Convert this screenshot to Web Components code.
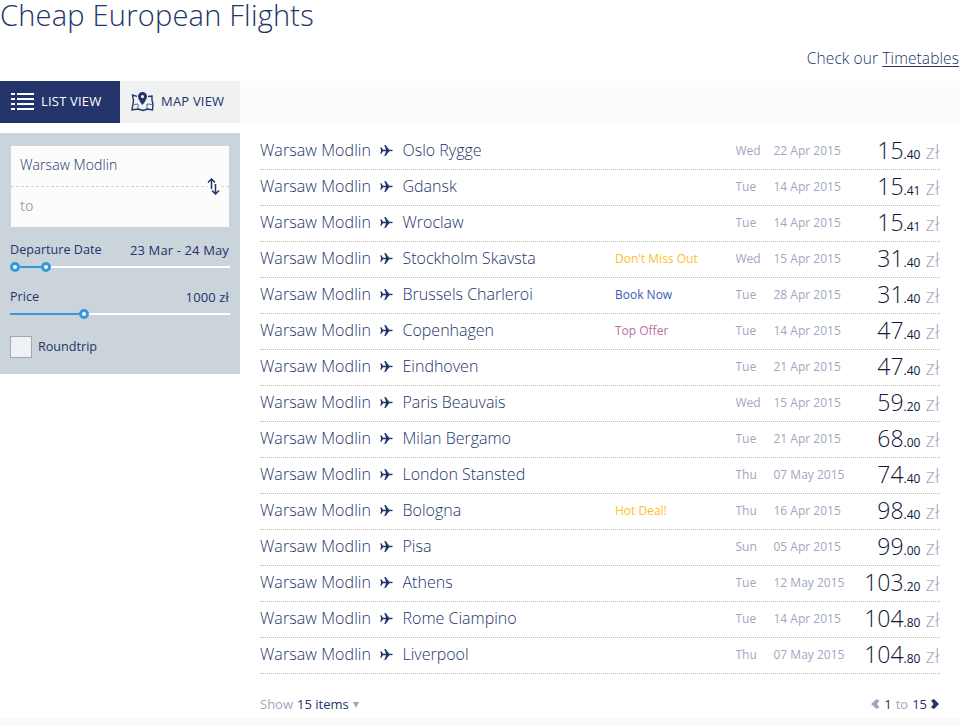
<!DOCTYPE html>
<html lang="en">
<head>
<meta charset="utf-8">
<title>Cheap European Flights</title>
<style>
    body {
        margin: 0;
        background: #fff;
        --color-navy: #22346a;
        --color-muted: #9fa7c0;
        --color-blue: #3498db;
        --color-panel: #cbd3db;
        color: var(--color-navy);
        font-family: "Open Sans", "Noto Sans", sans-serif;
        font-weight: 300;
    }
</style>
</head>
<body>
<fare-page></fare-page>

<script>
function define(name, html, setup) {
    const template = document.createElement('template');
    template.innerHTML = html;
    customElements.define(name, class extends HTMLElement {
        constructor() {
            super();
            this.attachShadow({ mode: 'open' });
            this.shadowRoot.appendChild(template.content.cloneNode(true));
        }

        connectedCallback() {
            if (setup) {
                setup(this, this.shadowRoot);
            }
        }
    });
}

define('page-header', `
    <style>
        :host { display: block; height: 81px; }
        h1 {
            margin: 0;
            height: 42px;
            line-height: 29px;
            font-size: 29px;
            font-weight: 300;
            letter-spacing: 0.23px;
            white-space: nowrap;
        }
        p {
            margin: 0;
            padding-right: 1px;
            line-height: 32px;
            font-size: 15.5px;
            letter-spacing: 0.1px;
            text-align: right;
        }
        a { color: inherit; text-decoration: underline; text-underline-offset: 2px; }
    </style>
    <h1>Cheap European Flights</h1>
    <p>Check our <a>Timetables</a></p>
`);

define('view-tab', `
    <style>
        :host {
            display: flex;
            align-items: center;
            gap: 7px;
            box-sizing: border-box;
            width: 120px;
            height: 42px;
            padding-left: 11px;
            background: #eff1f3;
            font-size: 13px;
            font-weight: 400;
            letter-spacing: 0.2px;
            white-space: nowrap;
        }
        :host([selected]) { background: var(--color-navy); color: #fff; font-weight: 500; }
        span { padding-bottom: 2px; }
        ::slotted(svg) { display: block; flex: none; }
    </style>
    <slot name="icon"></slot><span><slot></slot></span>
`);

define('search-box', `
    <style>
        :host {
            display: block;
            position: relative;
            height: 81px;
            margin: 0 1px;
            background: #fcfcfc;
            font-size: 14px;
            letter-spacing: 0.08px;
        }
        div { box-sizing: border-box; padding-left: 9px; height: 40px; line-height: 38px; }
        .to { border-top: 1px dashed #cbd3db; height: 41px; line-height: 37px; color: var(--color-muted); font-weight: 400; }
        svg { position: absolute; right: 9px; top: 32px; background: #fcfcfc; }
    </style>
    <div>Warsaw Modlin</div>
    <div class="to">to</div>
    <svg width="13" height="17" viewBox="0 0 13 17" fill="none" stroke="#22346a" stroke-width="1.5">
        <path d="M4.5 11V1.2M1 4.5L4.5 1L8 4.5"/>
        <path d="M8.5 6V15.8M5 12.5L8.5 16L12 12.5"/>
    </svg>
`);

define('range-slider', `
    <style>
        :host { display: block; height: 47px; font-size: 12.6px; font-weight: 400; }
        .labels { display: flex; justify-content: space-between; line-height: 18px; height: 21px; margin: 0 1px 0 0; }
        ::slotted([slot="value"]) { font-size: 13px; letter-spacing: 0.13px; }
        .track { display: flex; align-items: center; height: 10px; background: linear-gradient(#fff, #fff) 0 4px / 100% 2px no-repeat; }
        .knob { box-sizing: border-box; flex: none; width: 10px; height: 10px; border: 3px solid var(--color-blue); border-radius: 50%; background: #fff; }
        .bar { flex: none; height: 2px; background: var(--color-blue); }
    </style>
    <div class="labels"><slot name="label"></slot><slot name="value"></slot></div>
    <div class="track"></div>
`, (host, root) => {
    const knob = '<span class="knob"></span>';
    const bar = `<span class="bar" style="width:${host.getAttribute('fill')}px"></span>`;
    root.querySelector('.track').innerHTML = (host.hasAttribute('range') ? knob : '') + bar + knob;
});

define('check-option', `
    <style>
        :host { display: flex; align-items: center; gap: 6px; height: 22px; font-size: 12.6px; font-weight: 400; }
        i { box-sizing: border-box; width: 22px; height: 22px; border: 1px solid #9fa7c0; background: #eff1f3; }
        span { padding-bottom: 2px; }
    </style>
    <i></i><span><slot></slot></span>
`);

define('filter-panel', `
    <style>
        :host {
            display: block;
            box-sizing: border-box;
            flex: none;
            width: 240px;
            height: 241px;
            padding: 13px 10px 0;
            background: var(--color-panel);
        }
        search-box { margin-bottom: 14px; }
        check-option { margin-top: 1px; }
    </style>
    <search-box></search-box>
    <range-slider range fill="21">
        <span slot="label">Departure Date</span><span slot="value">23 Mar - 24 May</span>
    </range-slider>
    <range-slider fill="69">
        <span slot="label">Price</span><span slot="value">1000 zł</span>
    </range-slider>
    <check-option>Roundtrip</check-option>
`);

define('fare-row', `
    <style>
        :host {
            display: grid;
            grid-template-columns: 120px 22.5px 212.5px 120.5px 38px 80px 1fr;
            height: 35px;
            line-height: 33px;
            border-bottom: 1px dotted #bbb;
            font-size: 16px;
            white-space: nowrap;
        }
        .from { letter-spacing: 0.08px; }
        svg { display: block; margin-top: 10px; }
        .promo, .day, .date { font-size: 12px; font-weight: 400; line-height: 34px; }
        .day, .date { color: var(--color-muted); }
        .price { text-align: right; color: #101737; font-size: 23px; }
        .cents { font-size: 12px; font-weight: 400; }
        .currency { color: var(--color-muted); font-size: 20px; margin-left: 5px; letter-spacing: 0.4px; }
    </style>
    <span class="from">Warsaw Modlin</span>
    <svg width="13" height="13" viewBox="0 0 13 13" fill="#22346a">
        <path d="M.3 3.200h1.100l1.600 2.500h3L4.300 1h1.300l3.600 4.700h2.100q1.500.300 1.500.800t-1.500.800H9.200L5.600 12H4.300L6 7.300H3L1.400 9.800H.3l.8-3.300z"/>
    </svg>
    <span class="to"></span>
    <span class="promo"></span>
    <span class="day"></span>
    <span class="date"></span>
    <span class="price"><span class="whole"></span><span class="cents"></span><span class="currency">zł</span></span>
`, (host, root) => {
    const fare = host.fare;
    const [whole, cents] = fare.price.split('.');
    root.querySelector('.to').textContent = fare.to;
    root.querySelector('.promo').textContent = fare.promo || '';
    root.querySelector('.promo').style.color = fare.color || '';
    root.querySelector('.day').textContent = fare.day;
    root.querySelector('.date').textContent = fare.date + ' 2015';
    root.querySelector('.whole').textContent = whole;
    root.querySelector('.cents').textContent = '.' + cents;
});

define('list-pager', `
    <style>
        :host {
            display: flex;
            justify-content: space-between;
            height: 44px;
            padding: 20px 1px 0 0;
            box-sizing: border-box;
            line-height: 20px;
            font-size: 13px;
            font-weight: 400;
        }
        div { display: flex; align-items: center; gap: 4px; height: 20px; }
        .muted { color: var(--color-muted); }
        .pages { height: 19px; }
        .caret { border: 3px solid transparent; border-top: 6px solid #9fa7c0; border-bottom: 0; margin-top: 2px; }
        svg { display: block; }
    </style>
    <div><span class="muted">Show</span><span>15 items</span><i class="caret"></i></div>
    <div class="pages">
        <svg width="9" height="10" viewBox="0 0 9 10" fill="#9fa7c0"><path d="M5.500 0L8.500 1.500 6 5l2.500 3.500L5.500 10 0 5z"/></svg>
        <span>1</span><span class="muted">to</span><span>15</span>
        <svg width="8" height="10" viewBox="0 0 8 10" fill="#22346a"><path d="M3 0L0 1.500 2.500 5 0 8.500 3 10l5-5z"/></svg>
    </div>
`);

const YELLOW = '#fbc02d';
const fares = [
    { to: 'Oslo Rygge', day: 'Wed', date: '22 Apr', price: '15.40' },
    { to: 'Gdansk', day: 'Tue', date: '14 Apr', price: '15.41' },
    { to: 'Wroclaw', day: 'Tue', date: '14 Apr', price: '15.41' },
    { to: 'Stockholm Skavsta', day: 'Wed', date: '15 Apr', price: '31.40', promo: 'Don\'t Miss Out', color: YELLOW },
    { to: 'Brussels Charleroi', day: 'Tue', date: '28 Apr', price: '31.40', promo: 'Book Now', color: '#3c5bb0' },
    { to: 'Copenhagen', day: 'Tue', date: '14 Apr', price: '47.40', promo: 'Top Offer', color: '#b96fa3' },
    { to: 'Eindhoven', day: 'Tue', date: '21 Apr', price: '47.40' },
    { to: 'Paris Beauvais', day: 'Wed', date: '15 Apr', price: '59.20' },
    { to: 'Milan Bergamo', day: 'Tue', date: '21 Apr', price: '68.00' },
    { to: 'London Stansted', day: 'Thu', date: '07 May', price: '74.40' },
    { to: 'Bologna', day: 'Thu', date: '16 Apr', price: '98.40', promo: 'Hot Deal!', color: YELLOW },
    { to: 'Pisa', day: 'Sun', date: '05 Apr', price: '99.00' },
    { to: 'Athens', day: 'Tue', date: '12 May', price: '103.20' },
    { to: 'Rome Ciampino', day: 'Tue', date: '14 Apr', price: '104.80' },
    { to: 'Liverpool', day: 'Thu', date: '07 May', price: '104.80' },
];

define('fare-list', `
    <style>
        :host { display: block; width: 680px; padding-top: 1px; }
    </style>
    <section></section>
    <list-pager></list-pager>
`, (host, root) => {
    for (const fare of fares) {
        const row = document.createElement('fare-row');
        row.fare = fare;
        root.querySelector('section').appendChild(row);
    }
});

define('fare-page', `
    <style>
        :host { display: block; width: 960px; height: 726px; }
        nav { display: flex; height: 42px; background: #fcfcfc; }
        main { display: flex; gap: 20px; padding-top: 10px; height: 585px; }
        footer { height: 8px; background: #f9f9f9; }
    </style>
    <page-header></page-header>
    <nav>
        <view-tab selected>
            <svg slot="icon" width="23" height="18" viewBox="0 0 23 18" fill="#fff">
                <path d="M0 0h4v2H0zM6 0h17v2H6zM0 5h4v2H0zM6 5h17v2H6zM0 10h4v2H0zM6 10h17v2H6zM0 15h4v2H0zM6 15h17v2H6z"/>
            </svg>LIST VIEW
        </view-tab>
        <view-tab>
            <svg slot="icon" width="23" height="20" viewBox="0 0 23 20" fill="none" stroke="#22346a" stroke-width="1.4">
                <path d="M6 4.300L1.500 3l1 6L1 18l6-1 5 1.500 4.500-1.500 5 1 .5-6-1-3.500V4l-4 .500"/>
                <path d="M3 12.500L7 12v5M16 17v-5l5.500.500" stroke-width="1" opacity=".7"/>
                <path d="M11.500 0A4.500 4.500 0 0 0 7 4.500c0 3.200 4.500 8.500 4.500 8.500S16 7.700 16 4.500A4.500 4.500 0 0 0 11.500 0zm0 3a1.600 1.600 0 1 1 0 3.200 1.600 1.600 0 0 1 0-3.200z" fill="#22346a" fill-rule="evenodd" stroke="none"/>
            </svg>MAP VIEW
        </view-tab>
    </nav>
    <main>
        <filter-panel></filter-panel>
        <fare-list></fare-list>
    </main>
    <footer></footer>
`);
</script>
</body>
</html>
